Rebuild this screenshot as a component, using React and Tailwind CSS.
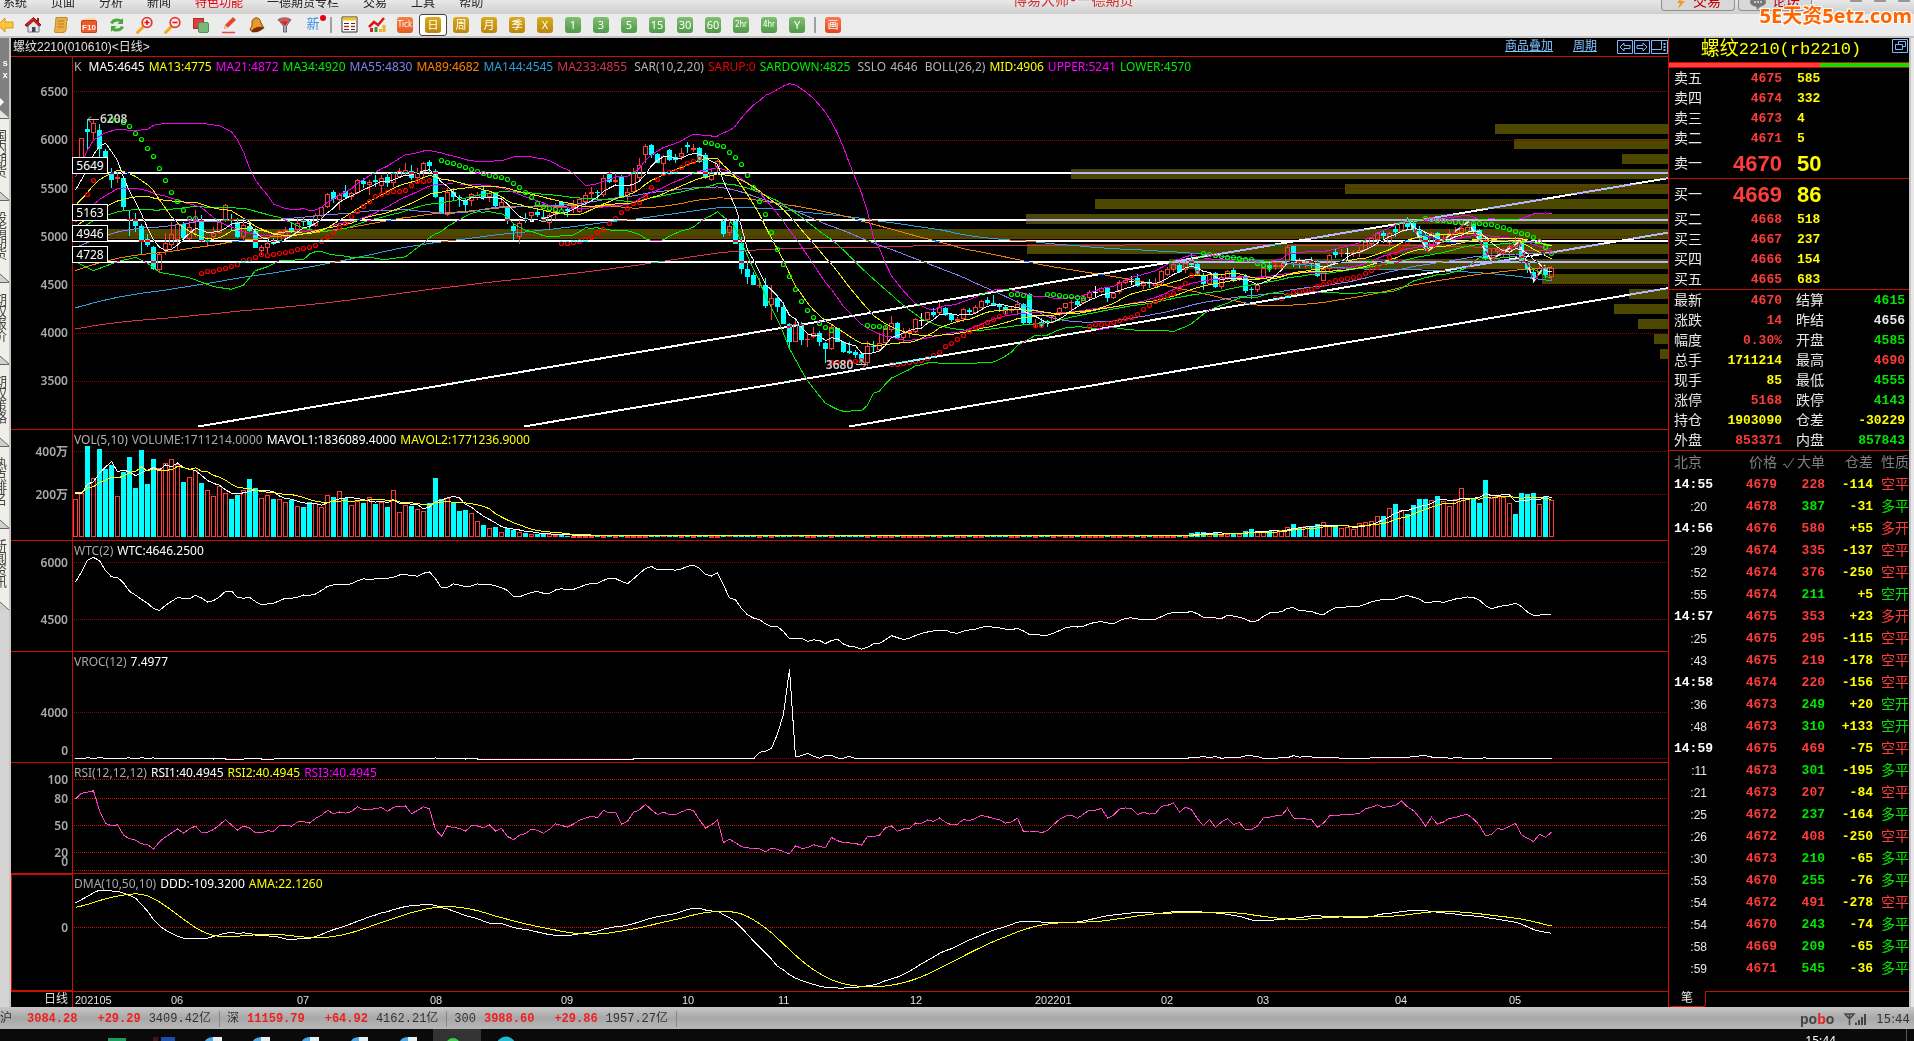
import React from "react";

const CJK = "font-['Liberation_Mono','Noto_Sans_CJK_SC',monospace]";
const TEXT = "font-['Liberation_Sans','Noto_Sans_CJK_SC',sans-serif]";
const SANS = "font-['Noto_Sans','Noto_Sans_CJK_SC',sans-serif]";
const NARROW = "font-['DejaVu_Sans_Condensed','Noto_Sans',sans-serif]";

/* ---------- market data: direction, high, top, bottom, low (chart units) ---------- */
const CANDLES_A = `r 440 450 480 490;r 295 295 400 400;c 238 267 276 330;r 240 250 278 300;c 252 270 326 350;c 327 333 400 400;c 385 398 420 443;r 395 411 416 430;c 410 415 500 510;c 510 537 540 587;c 520 537 557 575;c 553 558 605 645;c 583 598 615 620;c 618 620 687 690;r 640 643 691 697;r 580 610 630 645;r 545 583 615 625;r 550 553 600 633;c 545 553 593 597;r 540 560 598 600;r 510 538 545 590;c 525 540 603 606;r 590 600 605 622;r 562 580 592 597;r 540 545 578 582;r 492 495 540 545;c 522 538 542 570;c 533 545 590 595;r 550 556 590 600;c 540 558 573 577;c 565 573 623 625;r 615 622 632 645;r 600 609 625 640;c 595 604 612 616;r 570 572 603 605;r 560 570 590 600;c 545 563 577 580;r 535 550 570 575;c 530 540 546 557;c 540 543 555 567;r 520 525 558 562;r 500 502 527 530;r 460 463 500 505;c 450 457 478 488;r 460 465 480 510;c 435 452 470 475;r 455 458 470 480;r 418 420 458 462;c 415 423 432 445;r 420 427 434 465;c 405 420 425 440;r 405 415 438 460;c 400 412 428 440;r 395 400 430 440;r 385 393 410 415;r 370 390 400 405;c 375 393 414 420;r 385 395 415 430;r 367 370 397 410;c 360 367 377 400;c 388 392 470 473;c 470 471 520 523;r 445 457 526 528;c 445 455 471 480;c 465 470 475 500;c 475 480 495 515;r 458 462 482 497;r 455 465 473 480;c 435 452 475 480;r 455 460 472 485;c 457 460 498 505;r 470 485 500 505;c 497 500 542 552;c 550 558 572 600;r 540 550 590 612;c 520 533 540 550;r 515 517 528 545;c 505 515 525 530;c 510 530 545 547;r 520 525 550 567;r 490 495 525 540;c 483 485 505 510;c 505 508 513 530;r 480 498 503 520;r 470 478 515 520;r 455 465 485 500;r 440 455 462 475;c 450 455 460 480;r 405 415 465 470;c 395 400 425 430;r 400 420 425 430;c 405 408 470 475;r 445 455 470 490;r 385 395 455 460;r 355 375 415 420;r 313 318 345 370;c 313 315 345 355;c 340 342 368 370;r 345 348 373 395;c 328 330 360 362;c 343 350 360 368;r 325 340 352 360;c 307 315 320 340;r 313 325 331 335;c 320 324 367 370;c 340 345 413 416;r 390 395 421 423;r 360 363 380 400;c 540 542 582 590;r 545 557 580 588;c 540 543 611 613;c 590 608 688 703;c 663 688 710 733;c 695 705 734 735;r 715 735 737 745;c 715 735 798 803;r 735 775 795 840;c 770 775 800 815;c 785 802 851 852;c 848 851 905 920;r 840 853 905 907;c 845 852 900 915;r 880 898 900 920;r 860 878 892 895;c 873 880 907 917;c 905 910 926 968;r 855 860 926 930;c 863 865 905 907;c 903 905 935 938;c 905 934 940 942;c 930 937 945 955;c 938 942 970 972;r 903 917 968 977;c 903 917 920 935;r 880 910 930 935;r 855 863 910 915;r 827 850 870 875;c 845 850 893 895;r 865 878 895 907;r 865 873 880 895;r 835 838 875 880;w 820 840 843 858;r 815 817 840 848;c 805 817 825 830;r 787 802 820 823;c 800 803 825 828;c 820 822 840 845;r 830 836 842 850;r 805 808 838 845;c 803 810 815 823;r 795 800 820 823;r 780 783 803 805;c 772 780 788 795;c 765 790 795 797;c 790 795 800 815;c 795 800 813 825;r 800 808 813 820;r 780 792 810 823;c 790 793 850 853;c 760 762 848 852;r 838 848 850 860;c 833 845 857 860;c 840 843 848 860;r 825 828 845 850;r 800 805 825 828;r 788 790 803 808;r 780 785 790 810;c 780 783 795 798;r 765 775 790 793;r 750 755 775 778;w 738 755 757 770;r 742 745 755 760;c 740 744 773 785;r 755 760 773 778;r 720 727 757 763;r 718 720 728 733;w 708 722 724 735;c 703 715 738 740;r 722 728 737 747;c 718 728 733 743;r 715 730 737 740;r 690 693 730 735;r 680 688 705 708;r 668 672 690 695;c 665 675 696 698;r 663 668 690 700;c 640 660 675 677;c 668 672 705 708;c 700 706 732 750;r 700 703 732 735;c 697 700 741 743;r 705 712 742 748;r 690 693 715 720;c 685 690 722 727;r 705 712 715 722;c 703 708 752 760;c 740 747 750 778;r 730 735 750 757;r 680 685 712 715;c 670 675 683 695;r 665 675 682 690`;
const CANDLES_B = `r 605 615 620 627;r 555 562 610 615;c 555 558 605 620;c 595 603 608 625;r 600 610 613 625;c 590 603 612 625;c 600 605 648 650;r 620 628 662 663;r 583 585 628 640;c 568 575 585 595;r 568 578 583 590;w 565 578 580 605;r 570 575 583 590;r 560 570 580 590;r 540 545 570 573;r 530 535 552 560;r 515 520 540 545;c 510 520 527 550;r 517 520 548 560;c 493 508 515 530;r 480 485 515 517;c 472 485 500 510;c 480 490 510 515;c 498 513 530 540;c 520 525 563 572;r 515 520 560 567;c 515 520 550 555;r 525 540 545 548;r 508 520 540 545;r 500 517 525 535;r 495 505 520 530;r 480 500 520 525;c 490 493 515 522;c 507 510 540 545;c 530 540 597 600;r 565 590 598 605;r 560 567 577 590;r 565 570 580 590;r 545 557 575 590;r 538 545 560 570;c 540 545 605 608;c 600 605 630 640;c 625 636 655 668;r 615 625 640 645;c 620 625 645 655;r 618 623 650 662`;

const parse = (s, add) =>
  s.split(";").map((row) => {
    const [d, ...n] = row.trim().split(" ");
    const [hi, top, bot, lo] = n.map((v) => Number(v) + add);
    return { d, hi, top, bot, lo, close: d === "c" ? bot : top };
  });
const candles = [...parse(CANDLES_A, 0), ...parse(CANDLES_B, 60)];
const N = candles.length;
const X = (i) => 75.5 + 6 * i;
const Y = (v) => 40 + v / 3;

/* closes that precede the visible window, oldest first */
const block = (n, v) => Array(n).fill(v);
const history = [
  ...block(89, 968), ...block(55, 988), ...block(34, 805), ...block(21, 711),
  ...block(13, 612), ...block(8, 640), ...block(8, 535), ...block(5, 450),
];
const H = history.length;
const closes = [...history, ...candles.map((c) => c.close)];
const price = (v) => 6500 - ((v - 155) * 500) / 145;

const sma = (arr, n, i) => {
  let s = 0;
  for (let k = i - n + 1; k <= i; k++) s += arr[Math.max(0, k)];
  return s / n;
};
const series = (fn) => candles.map((_, i) => fn(i + H, i));
const ma = (n) => series((j) => sma(closes, n, j));
const toPts = (ys) => ys.map((y, i) => `${X(i)},${y.toFixed(1)}`).join(" ");

const bollMid = ma(26);
const bollDev = series((j) => {
  const m = sma(closes, 26, j);
  let s = 0;
  for (let k = j - 25; k <= j; k++) s += (closes[k] - m) ** 2;
  return 2 * Math.sqrt(s / 26);
});

/* known band values for the opening bars, linearly interpolated */
const withKnots = (ys, knots) =>
  ys.map((y, i) => {
    const n = knots.findIndex((k) => k[0] >= i);
    if (n < 0) return y;
    if (n === 0) return knots[0][1];
    const [a, va] = knots[n - 1];
    const [b, vb] = knots[n];
    return va + ((vb - va) * (i - a)) / (b - a);
  });
const UPPER = [[0, 412], [2, 330], [3, 300], [5, 278], [7, 268], [10, 272], [12, 268], [13, 256], [15, 250], [21, 250], [24, 257], [26, 275], [27, 300], [28, 335], [29, 385], [30, 420], [31, 445], [32, 465], [33, 492], [35, 506], [37, 509]];
const LOWER = [[0, 665], [3, 692], [7, 665], [10, 652], [12, 670], [14, 697], [19, 713], [23, 740], [26, 748], [28, 735], [30, 692], [32, 680], [34, 662], [38, 659]];

const MA_LINES = [
  ["#d8324f", ma(233)], ["#2f9fdc", ma(144)], ["#f08000", ma(89)], ["#8080f0", ma(55)],
  ["#00f000", ma(34)], ["#f000f0", ma(21)], ["#f0f000", ma(13)], ["#f0f000", bollMid],
  ["#f000f0", withKnots(bollMid.map((m, i) => m - bollDev[i]), UPPER)],
  ["#00f000", withKnots(bollMid.map((m, i) => m + bollDev[i]), LOWER)],
  ["#f0f0f0", ma(5)],
].map(([c, ys]) => [c, toPts(ys.map(Y))]);

/* parabolic SAR dots: colour, first bar, values */
const SAR = [
  ["g", 6, [238, 241, 247, 259, 279, 298, 325, 349, 385, 421, 455, 484, 511, 533, 534]],
  ["r", 2, [463, 419]],
  ["r", 21, [698, 694, 692, 688, 685, 677, 671, 661, 656, 650, 643, 645, 643, 640, 636, 632, 628, 625, 620, 615, 603, 592, 577, 562, 548, 527, 512, 497, 482, 468, 462, 455, 452, 452, 451, 434, 422, 422, 420]],
  ["g", 61, [361, 365, 370, 375, 381, 388, 394, 400, 404, 408, 412, 418, 428, 440, 457, 472, 490, 498, 505, 508, 512]],
  ["r", 81, [610, 608, 605, 604, 598, 590, 577, 568, 550, 534, 517, 503, 488, 487, 467, 440, 416, 398, 395, 393, 382, 370, 364, 353]],
  ["g", 105, [307, 308, 314, 317, 335, 350, 371, 404, 441, 484, 523, 575, 628, 672, 707, 748, 784, 811, 832, 850, 860, 870]],
  ["r", 126, [967, 967, 965, 963, 963, 960]],
  ["g", 132, [856, 858, 858, 862]],
  ["r", 136, [973, 971, 968, 966, 963, 960, 953, 946, 935, 919, 908, 896, 884, 873, 862, 855, 847, 838, 827, 815]],
  ["g", 156, [763, 763, 766, 770]],
  ["r", 160, [855, 856]],
  ["g", 162, [761, 763, 764, 767, 767, 770, 773]],
  ["r", 169, [857, 853, 852, 848, 845, 840, 835, 830, 821, 808, 796, 784, 773, 765, 758, 745, 730, 706, 696]],
  ["g", 188, [640, 643, 645, 648, 650, 652, 653, 657, 658, 668, 675, 680]],
  ["r", 200, [775, 775, 765, 757, 753, 750, 748, 738, 732, 725, 720, 717, 715, 712, 708, 700, 690, 680, 665, 650, 635, 620, 605]],
  ["g", 225, [535, 537, 540, 541, 543, 545, 547, 548, 549, 549, 551, 553, 557, 560, 566, 572, 578, 583, 590, 602, 622, 640]],
];

/* price distribution bars: top y, left x */
const PROFILE = [
  [124, 1495], [139, 1514], [154, 1622], [169, 1071], [184, 1345], [199, 1095], [214, 1026], [229, 108],
  [244, 1027], [259, 1169], [274, 1542], [289, 1629], [304, 1614], [319, 1638], [334, 1654], [349, 1660],
];

/* volume */
const VOL_HEAD = [238, 220, 78, 175, 87, 147, 135, 229, 155, 111, 204, 90, 192, 117, 145, 130, 118, 133, 186, 172, 150, 189, 211, 229, 199, 220, 237, 225, 211, 177, 204, 235, 226, 237, 238, 246, 240, 259, 261, 246, 249, 262, 226, 231, 214, 235, 256, 243, 249, 232, 251, 246, 261, 211, 277, 256, 258, 268, 274, 249, 174, 237, 235, 250, 274, 270, 280, 304, 315, 324, 321, 337, 325, 330, 337, 340, 343, 342, 341, 343, 345, 345];
const VOL_TAIL = [340, 336, 336, 342, 336, 345, 341, 341, 341, 333, 327, 337, 335, 333, 331, 330, 321, 312, 325, 318, 322, 312, 306, 318, 320, 324, 321, 328, 310, 306, 303, 289, 288, 265, 252, 271, 282, 255, 237, 237, 241, 228, 244, 259, 238, 204, 235, 237, 249, 180, 235, 228, 230, 250, 282, 219, 222, 219, 253, 229, 241];
const vol = [
  ...VOL_HEAD,
  ...Array.from({ length: N - VOL_HEAD.length - VOL_TAIL.length }, (_, i) => (i % 11 === 5 ? 345 : 347)),
  ...VOL_TAIL,
];
const volAll = [...block(12, 215), ...vol];
const VY = (v) => 420 + v / 3;
const volMa = (n) => toPts(vol.map((_, i) => VY(sma(volAll, n, i + 12))));

/* WTC */
const wtc = toPts(series((j) => 562.3 + ((6000 - price((closes[j] + closes[j - 1]) / 2)) * 57.4) / 1500));

/* VROC */
const SPIKE = [1017, 997, 994, 985, 942, 882, 748, 1010, 1007, 1000, 1009, 1015, 1006, 1006, 1014, 1015, 1009];
const vroc = toPts(
  vol.map((v, i) => {
    if (i >= 113 && i < 130) return VY(SPIKE[i - 113]);
    const now = 352 - v;
    const then = 352 - volAll[i];
    return VY(1016 - Math.max(-1, Math.min(9, ((now - then) / then) * 3)));
  })
);

/* RSI */
let up = 13.3;
let all = 17;
const rsi = toPts(
  series((j) => {
    const d = j === H ? 3 : closes[j - 1] - closes[j];
    const move = Math.min(d, 70);
    up = (up * 11 + Math.max(move, 0)) / 12;
    all = (all * 11 + Math.abs(move)) / 12;
    return 870.3 - (up / all) * 91;
  })
);

/* DMA */
const ddd = closes.map((_, j) => (j < 60 ? 0 : (sma(closes, 50, j) - sma(closes, 10, j)) * 3.448));
const DY = (v) => 927.3 - v / 18.2;
const dddLine = toPts(series((j) => DY(ddd[j])));
const amaLine = toPts(series((j) => DY(sma(ddd, 10, j))));

const GRID = "#900000";
const Grid = ({ ys, color = GRID }) => (
  <g stroke={color} strokeWidth="1" strokeDasharray="1 1" shapeRendering="crispEdges">
    {ys.map((y) => <line key={y} x1="74" x2="1668" y1={y + 0.5} y2={y + 0.5} />)}
  </g>
);

const Curve = ({ color, points, w = 1 }) => (
  <polyline points={points} fill="none" stroke={color} strokeWidth={w} shapeRendering="crispEdges" />
);

function Panel({ top, height, axis, labels, children, extra, selected }) {
  return (
    <section className="flex min-h-0 border-b border-[#c80f00]">
      <div className={"relative w-[62px] shrink-0 border-r border-[#c80f00] " + (selected ? "border-y border-l" : "")}>
        {axis.map(([t, y]) => (
          <span key={t} className={`absolute right-1 -translate-y-1/2 text-[12px] leading-4 font-semibold text-[#a8a8a8] ${SANS}`} style={{ top: `${((y - top) / height) * 100}%` }}>{t}</span>
        ))}
      </div>
      <div className="relative min-w-0 flex-1">
        <svg viewBox={`73 ${top} 1595 ${height}`} preserveAspectRatio="none" className="absolute inset-0 h-full w-full">{children}</svg>
        <div className={`absolute top-0.5 left-px flex gap-1 text-[12px] leading-4 whitespace-nowrap ${SANS}`}>
          {labels.map(([t, c]) => <span key={t} className="whitespace-pre" style={{ color: c }}>{t}</span>)}
        </div>
        {extra}
      </div>
    </section>
  );
}

const TAGS = [[5649, 100], [5163, 147], [4946, 168], [4728, 189]];

function PricePanel() {
  return (
    <Panel
      top={57} height={372}
      axis={[[6500, 92], [6000, 140], [5500, 189], [5000, 237], [4500, 285], [4000, 333], [3500, 381]]}
      labels={[["K ", "#b4b4b4"], ["MA5:4645", "#fff"], ["MA13:4775", "#ff0"], ["MA21:4872", "#f0f"], ["MA34:4920", "#00f000"], ["MA55:4830", "#8080f0"], ["MA89:4682", "#ff8000"], ["MA144:4545", "#2f9fdc"], ["MA233:4855", "#d8324f"], [" SAR(10,2,20)", "#b4b4b4"], ["SARUP:0", "#f00000"], ["SARDOWN:4825", "#00f000"], [" SSLO", "#b4b4b4"], ["4646 ", "#b4b4b4"], ["BOLL(26,2)", "#b4b4b4"], ["MID:4906", "#ff0"], ["UPPER:5241", "#f0f"], ["LOWER:4570", "#00f000"]]}
      extra={
        <>
          {TAGS.map(([t, y]) => (
            <span key={t} className={`absolute -left-px h-[17px] w-[36px] border border-white bg-black text-center text-[12px] leading-[15px] text-white ${SANS}`} style={{ top: `${(y / 372) * 100}%` }}>{t}</span>
          ))}
          <span className={`absolute left-[27px] text-[12px] leading-4 font-semibold text-[#d0d0d0] ${SANS}`} style={{ top: "14.5%" }}>6208</span>
          <span className={`absolute text-[12px] leading-4 font-semibold text-[#d0d0d0] ${SANS}`} style={{ top: "80.6%", left: "47.2%" }}>3680</span>
        </>
      }
    >
      <g fill="#4c4800">
        {PROFILE.map(([y, x]) => <rect key={y} x={x} y={y} width={1668 - x} height="10" />)}
      </g>
      <Grid ys={[91, 140, 188, 236, 285, 333, 381]} />
      <g shapeRendering="crispEdges">
        {candles.map((c, i) => {
          if (i === 0) return null;
          const color = c.d === "c" ? "#00ffff" : c.d === "r" ? "#ff3c3c" : "#ffffff";
          const t = Math.round(Y(c.top));
          const b = Math.max(Math.round(Y(c.bot)), t + 1);
          return (
            <g key={i} stroke={color} fill={c.d === "c" ? color : "none"}>
              <line x1={X(i)} x2={X(i)} y1={Y(c.hi)} y2={t} />
              <line x1={X(i)} x2={X(i)} y1={b} y2={Y(c.lo)} />
              <rect x={X(i) - 2} y={t + 0.5} width="4" height={Math.max(b - t - 1, 0.1)} />
            </g>
          );
        })}
      </g>
      {MA_LINES.map(([c, p], i) => <Curve key={i} color={c} points={p} />)}
      {SAR.map(([c, start, vs]) =>
        vs.map((v, k) => <ellipse key={`${start}-${k}`} cx={X(start + k)} cy={Math.round(Y(v)) + 0.5} rx="2" ry="2" fill="none" stroke={c === "g" ? "#00ff00" : "#ff0000"} strokeWidth="1.200" />)
      )}
      <polyline points="1408,219 1428,251 1468,222 1491,260 1519,242 1534,281 1545,265" fill="none" stroke="#fff" strokeWidth="1.500" />
      <polyline points="1408,219 1428,251 1468,222 1491,260 1519,242 1534,281 1545,265" fill="none" stroke="#c00040" strokeWidth="1.500" strokeDasharray="5 6" />
      <polyline points="1419,234 1450,243 1481,240 1506,241 1534,242" fill="none" stroke="#2020ff" strokeWidth="1" />
      <g className="mix-blend-difference" stroke="#fff" strokeWidth="2" shapeRendering="crispEdges">
        {[173, 220, 241, 262].map((y) => <line key={y} x1="73" x2="1668" y1={y} y2={y} />)}
        <path d="M198 426.500L1669 178M524 426.500L1669 232.500M849 426.500L1669 288" />
      </g>
      <path d="M88 119.500h11M88 119.500l3-3M88 119.500l3 3M856 364.500h10M866 364.500l-3-3M866 364.500l-3 3" stroke="#d0d0d0" fill="none" />
    </Panel>
  );
}

function VolumePanel() {
  return (
    <Panel
      top={430} height={110} axis={[["400万", 452], ["200万", 495]]}
      labels={[["VOL(5,10)", "#b4b4b4"], ["VOLUME:1711214.0000", "#a8a8a8"], ["MAVOL1:1836089.4000", "#fff"], ["MAVOL2:1771236.9000", "#ff0"]]}
    >
      <Grid ys={[451, 494]} />
      <g shapeRendering="crispEdges">
        {vol.map((v, i) => {
          const y = Math.round(VY(v));
          const cyan = candles[i].d === "c" || i === 240;
          return cyan
            ? <rect key={i} x={X(i) - 2.5} y={y} width="5" height={537 - y} fill="#00ffff" />
            : <rect key={i} x={X(i) - 2} y={y + 0.5} width="4" height={Math.max(536 - y, 0.5)} fill="none" stroke="#ff3c3c" />;
        })}
      </g>
      <Curve color="#fff" points={volMa(5)} />
      <Curve color="#ff0" points={volMa(10)} />
    </Panel>
  );
}

const DATES = [["202105", 74], ["06", 170], ["07", 296], ["08", 429], ["09", 560], ["10", 681], ["11", 777], ["12", 909], ["202201", 1034], ["02", 1160], ["03", 1256], ["04", 1394], ["05", 1508]];

function ChartArea() {
  return (
    <main className="flex min-w-0 flex-1 flex-col">
      <header className="flex h-[19px] shrink-0 items-center border-b border-[#c80f00]">
        <h1 className={`pl-0.5 text-[12px] text-[#e0e0e0] ${TEXT}`}>螺纹2210(010610)&lt;日线&gt;</h1>
        <div className={`ml-auto flex items-center gap-5 text-[12px] leading-4 text-[#7fc4ff] ${CJK}`}>
          <a href="#overlay" className="underline">商品叠加</a>
          <a href="#period" className="underline">周期</a>
          <div className="flex gap-px">
            <button aria-label="左移"><svg width="16" height="14" fill="none" stroke="#7fb8ff"><path d="M.5.500h15v13H.5zM3 7l4-4v2.500h6v3H7V11z" /></svg></button>
            <button aria-label="右移"><svg width="16" height="14" fill="none" stroke="#7fb8ff"><path d="M.5.500h15v13H.5zM13 7L9 3v2.500H3v3h6V11z" /></svg></button>
            <button aria-label="布局"><svg width="17" height="14" fill="none" stroke="#7fb8ff"><path d="M.5.500h16v13H.5zM1 9.500h9.500V1" /><path d="M13.500 3v9" strokeDasharray="2 1" strokeWidth="2" /></svg></button>
          </div>
        </div>
      </header>
      <div className="grid min-h-0 flex-1 grid-rows-[373fr_111fr_111fr_111fr_111fr_118fr]">
        <PricePanel />
        <VolumePanel />
        <Panel top={541} height={110} axis={[["6000", 563], ["4500", 620]]} labels={[["WTC(2)", "#a8a8a8"], ["WTC:4646.2500", "#fff"]]}>
          <Grid ys={[562, 619]} />
          <Curve color="#fff" points={wtc} />
        </Panel>
        <Panel top={652} height={110} axis={[["4000", 713], ["0", 751]]} labels={[["VROC(12)", "#a8a8a8"], ["7.4977", "#fff"]]}>
          <Grid ys={[712, 758]} />
          <Curve color="#fff" points={vroc} />
        </Panel>
        <Panel top={763} height={110} axis={[["100", 780], ["80", 799], ["50", 826], ["20", 853], ["0", 862]]} labels={[["RSI(12,12,12)", "#a8a8a8"], ["RSI1:40.4945", "#fff"], ["RSI2:40.4945", "#ff0"], ["RSI3:40.4945", "#f0f"]]}>
          <Grid ys={[779, 798, 825, 852, 870]} color="#c80f00" />
          <Curve color="#ff20e0" points={rsi} />
          <polyline points={rsi} fill="none" stroke="#ff6a90" strokeDasharray="4 5" shapeRendering="crispEdges" />
        </Panel>
        <Panel selected top={874} height={117} axis={[["0", 928]]} labels={[["DMA(10,50,10)", "#a8a8a8"], ["DDD:-109.3200", "#fff"], ["AMA:22.1260", "#ff0"]]}>
          <Grid ys={[927]} color="#c80f00" />
          <Curve color="#fff" points={dddLine} />
          <Curve color="#ff0" points={amaLine} />
        </Panel>
      </div>
      <footer className={`flex h-[15px] shrink-0 text-[12px] leading-4 text-[#e0e0e0] ${CJK}`}>
        <span className="w-[62px] border-r border-[#c80f00] pr-1 text-right">日线</span>
        <div className={`relative flex-1 text-[11px] ${TEXT}`}>
          {DATES.map(([t, x]) => <span key={t} className="absolute top-0" style={{ left: `${((x - 72) / 1595) * 100}%` }}>{t}</span>)}
        </div>
      </footer>
    </main>
  );
}

/* ---------- quote panel ---------- */
const R = "text-[#ff3c3c]", G = "text-[#00e600]", Yl = "text-[#ffff00]", W = "text-[#e8e8e8]";
const ASKS = [["卖五", 4675, 585], ["卖四", 4674, 332], ["卖三", 4673, 4], ["卖二", 4671, 5], ["卖一", 4670, 50]];
const BIDS = [["买一", 4669, 86], ["买二", 4668, 518], ["买三", 4667, 237], ["买四", 4666, 154], ["买五", 4665, 683]];
const STATS = [
  ["最新", "4670", R, "结算", "4615", G], ["涨跌", "14", R, "昨结", "4656", W], ["幅度", "0.30%", R, "开盘", "4585", G],
  ["总手", "1711214", Yl, "最高", "4690", R], ["现手", "85", Yl, "最低", "4555", G], ["涨停", "5168", R, "跌停", "4143", G],
  ["持仓", "1903090", Yl, "仓差", "-30229", Yl], ["外盘", "853371", R, "内盘", "857843", G],
];
const TICKS = `14:55 4679 228 -114 空平 r;:20 4678 387 -31 多平 g;14:56 4676 580 +55 多开 r;:29 4674 335 -137 空平 r;:52 4674 376 -250 空平 r;:55 4674 211 +5 空开 g;14:57 4675 353 +23 多开 r;:25 4675 295 -115 空平 r;:43 4675 219 -178 空平 r;14:58 4674 220 -156 空平 r;:36 4673 249 +20 空开 g;:48 4673 310 +133 空开 g;14:59 4675 469 -75 空平 r;:11 4673 301 -195 多平 g;:21 4673 207 -84 空平 r;:25 4672 237 -164 多平 g;:26 4672 408 -250 空平 r;:30 4673 210 -65 多平 g;:53 4670 255 -76 多平 g;:54 4672 491 -278 空平 r;:54 4670 243 -74 多平 g;:58 4669 209 -65 多平 g;:59 4671 545 -36 多平 g`
  .split(";").map((r) => r.split(" "));

function Book({ rows, big }) {
  return (
    <table className="w-full table-fixed border-b border-[#c80f00]">
      <tbody>
        {rows.map(([n, p, v]) => {
          const l = n === big;
          const size = l ? "h-[30px] font-['Liberation_Sans',sans-serif] text-[22px] leading-[28px]" : "h-5 text-[13px] leading-[18px]";
          return (
            <tr key={n}>
              <th className={`w-[44px] p-0 pt-0.5 pl-[5px] text-left text-[14px] font-normal ${W} ${l ? "leading-[28px]" : "leading-[18px]"}`}>{n}</th>
              <td className={`w-[69px] p-0 pt-0.5 text-right font-bold ${R} ${size}`}>{p}</td>
              <td className={`p-0 pt-0.5 pl-[15px] font-bold ${Yl} ${size}`}>{v}</td>
            </tr>
          );
        })}
      </tbody>
    </table>
  );
}

function QuotePanel() {
  return (
    <aside className={`flex w-[241px] shrink-0 flex-col border-l border-[#c80f00] text-[13px] ${CJK}`}>
      <div className="relative flex h-6 shrink-0 items-center justify-center text-[#ffff00]">
        <h2 className="flex items-center pr-4 leading-6"><span className="text-[19px]">螺纹</span><span className="text-[17px]">2210(rb2210)</span></h2>
        <button aria-label="还原" className="absolute top-px right-px"><svg width="16" height="14" fill="none" stroke="#7fb8ff"><path d="M.5.500h15v13H.5zM6.500 5.500v-3h7v5h-3M3.500 5.500h7v5h-7z" /></svg></button>
      </div>
      <div className="flex h-[6px] shrink-0 border-y border-[#c80f00]"><div className="w-[63%] bg-[#ff3c3c]" /><div className="flex-1 bg-[#00e600]" /></div>
      <Book rows={ASKS} big="卖一" />
      <Book rows={BIDS} big="买一" />
      <table className="w-full table-fixed border-b border-[#c80f00]">
        <tbody>
          {STATS.map(([a, b, c, d, e, f]) => (
            <tr key={a} className="h-5 leading-[18px]">
              <th className={`w-[36px] p-0 pt-0.5 pl-[5px] text-left text-[14px] font-normal ${W}`}>{a}</th>
              <td className={`w-[77px] p-0 pt-0.5 text-right font-bold ${c}`}>{b}</td>
              <th className={`w-[46px] p-0 pt-0.5 pl-[14px] text-left text-[14px] font-normal ${W}`}>{d}</th>
              <td className={`p-0 pt-0.5 pr-1 text-right font-bold ${f}`}>{e}</td>
            </tr>
          ))}
        </tbody>
      </table>
      <table className="w-full table-fixed">
        <thead>
          <tr className="h-[22px] text-right text-[14px] leading-5 text-[#808080]">
            <th className="w-[38px] p-0 pt-0.5 pl-[5px] text-left font-normal">北京</th>
            <th className="w-[70px] p-0 pt-0.5 font-normal">价格</th>
            <th className="w-[48px] p-0 pt-0.5 font-normal whitespace-nowrap"><svg width="13" height="12" className="mr-0.5 inline-block" fill="none" stroke="#808080"><path d="M1 8l2-1 2 4 7-10" /></svg>大单</th>
            <th className="w-[48px] p-0 pt-0.5 font-normal">仓差</th>
            <th className="p-0 pt-0.5 font-normal">性质</th>
          </tr>
        </thead>
        <tbody>
          {TICKS.map(([t, p, v, d, k, c], i) => {
            const col = c === "r" ? R : G;
            return (
              <tr key={i} className="h-[22px] text-right leading-5 font-bold">
                <td className={t.length > 3 ? "w-[38px] p-0 pt-0.5 pl-[5px] text-left text-[13px] text-white" : "w-[38px] p-0 pt-0.5 font-['Liberation_Sans',sans-serif] text-[12px] font-normal text-[#e8e8e8]"}>{t}</td>
                <td className={`p-0 pt-0.5 ${R}`}>{p}</td>
                <td className={`p-0 pt-0.5 ${col}`}>{v}</td>
                <td className={`p-0 pt-0.5 ${Yl}`}>{d}</td>
                <td className={`p-0 pt-0.5 text-[14px] font-normal ${col}`}>{k}</td>
              </tr>
            );
          })}
        </tbody>
      </table>
      <div className="mt-auto flex h-4 shrink-0">
        <button className="w-[37px] rounded-b-[3px] border-r border-b border-[#c80f00] text-center text-[12px] leading-[14px] text-[#e8e8e8]">笔</button>
        <div className="flex-1 border-t border-[#c80f00]" />
      </div>
    </aside>
  );
}

/* ---------- toolbar ---------- */
const Tile = ({ t, a, b, c = "text-white" }) => (
  <span className={`flex h-4 w-4 items-center justify-center rounded-[3px] bg-linear-to-b text-[11px] leading-4 ${a} ${b} ${c} ${SANS}`}>{t}</span>
);
const Lens = ({ plus }) => (
  <svg width="18" height="18" viewBox="0 0 18 18"><path d="M1.500 16.500l6-6" stroke="#f5a81c" strokeWidth="3" strokeLinecap="round" /><circle cx="11" cy="6.500" r="4.800" fill="#ffecec" stroke="#e23b30" strokeWidth="1.800" /><path d={plus ? "M8.500 6.500h5M11 4v5" : "M8.500 6.500h5"} stroke="#e01010" strokeWidth="1.600" /></svg>
);
const ICONS = [
  ["后退", <svg width="18" height="18" viewBox="0 0 18 18"><path d="M2 9l7-7v4h8v6H9v4z" fill="#fcc63a" stroke="#d99a17" /></svg>],
  ["首页", <svg width="18" height="18" viewBox="0 0 18 18"><path d="M4 8v8h11V8" fill="#e4e6ea" stroke="#70757c" /><path d="M1 9l8.500-7.500L17 9l-2 1-5.500-5L3 10.500z" fill="#d81e1e" stroke="#8c1010" /><path d="M8 11h3.500v5H8z" fill="#404850" /><path d="M13 2h2v4h-2z" fill="#a01414" /></svg>],
  ["资讯", <svg width="18" height="18" viewBox="0 0 18 18"><path d="M4 1.500h11q1.500 2-.5 4l-.5 9q-1 2-3 2H3q-1.500-1.500 0-4z" fill="#e9b04a" stroke="#c58a22" /><path d="M6 5h6M6 8h6M5.500 11h6" stroke="#b57a18" /></svg>],
  ["F10", <svg width="18" height="18" viewBox="0 0 18 18"><path d="M3 3l12-2v5H3z" fill="#fbd9a0" /><rect x="1.500" y="4.500" width="15" height="12" rx="1" fill="#ef5a28" stroke="#c8401a" /><text x="9" y="14" textAnchor="middle" fontSize="8" fontWeight="700" fill="#fff" fontFamily="Liberation Sans">F10</text></svg>],
  ["刷新", <svg width="18" height="18" viewBox="0 0 18 18" fill="none" stroke="#4aa83e" strokeWidth="3"><path d="M3.500 7.500Q5 4 9 4t5 2M14.500 10.500Q13 14 9 14t-5-2" /><path d="M15 2v6H9.500zM3 16v-6h5.500z" fill="#4aa83e" stroke="none" /></svg>],
  ["放大", <Lens plus />],
  ["缩小", <Lens />],
  ["叠加", <svg width="18" height="18" viewBox="0 0 18 18"><rect x="1.500" y="2.500" width="10" height="10" fill="#d8423a" stroke="#b02a24" /><rect x="6.500" y="6.500" width="10" height="10" rx="1.500" fill="#78b878" stroke="#4f9450" /></svg>],
  ["画线", <svg width="18" height="18" viewBox="0 0 18 18"><path d="M4 13l1-4L13 1l3 3-8 7.500z" fill="#e8452c" /><path d="M4 13l1-4 3 2.500z" fill="#f6c890" /><path d="M2 16.500h13" stroke="#f0443c" strokeWidth="1.500" /></svg>],
  ["预警", <svg width="18" height="18" viewBox="0 0 18 18"><path d="M7 2q5-1 6 5l3 5-11 4q-3-1-3-3 3-3 2-6t3-5z" fill="#e79a2c" stroke="#8c4a0c" /><ellipse cx="9.500" cy="13.500" rx="6" ry="2.300" transform="rotate(-18 9.500 13.500)" fill="#7a2c08" /></svg>],
  ["选股", <svg width="18" height="18" viewBox="0 0 18 18"><path d="M2 3.500h13L10.500 10v6h-3v-6z" fill="#a9adb3" stroke="#666b72" /><ellipse cx="8.500" cy="3.800" rx="6" ry="2" fill="#e85050" stroke="#777" /><path d="M4.500 5.500h8L9 10z" fill="#e02020" /></svg>],
  ["新", <span className="relative text-[13px] leading-4 text-[#3b8eea]">新<i className="absolute -top-0.5 -right-1.5 h-1.5 w-1.5 rounded-full bg-red-600" /></span>],
];
const PERIODS = [
  ["Tick", "from-[#f58048]", "to-[#e45c24]"], ["日", "from-[#d9ab1c]", "to-[#b98708]"], ["周", "from-[#d9ab1c]", "to-[#b98708]"],
  ["月", "from-[#d9ab1c]", "to-[#b98708]"], ["季", "from-[#d9ab1c]", "to-[#b98708]"], ["X", "from-[#d9ab1c]", "to-[#b98708]"],
  ...["1", "3", "5", "15", "30", "60", "2hr", "4hr", "Y"].map((t) => [t, "from-[#7fbf70]", "to-[#4f9a48]"]),
];
const Btn = ({ label, on, children }) => (
  <button aria-label={label} className={`flex h-[22px] w-7 shrink-0 items-center justify-center ${on ? "rounded-[3px] border border-[#444] bg-white" : ""}`}>{children}</button>
);

function Toolbar() {
  return (
    <div className={`flex h-6 shrink-0 items-center overflow-hidden border-b-2 border-[#c8c4c4] bg-[#ececec] pb-px ${CJK}`}>
      <div className="-ml-[9px] flex items-center">
        {ICONS.map(([n, icon]) => <Btn key={n} label={n}>{icon}</Btn>)}
        <i className="mx-[3px] h-4 w-0.5 bg-[#a0a0a0]" />
        <Btn label="报价"><svg width="17" height="17" viewBox="0 0 17 17"><path d="M1 1h15v15H1z" fill="#fff" stroke="#333" /><path d="M1.500 1.500h14v3h-14z" fill="#f2c31c" /><path d="M3 7.500h5M3 13.500h5M10 7.500h4M10 13.500h4" stroke="#333" strokeWidth="1.200" /><path d="M3 10.500h5M10 10.500h4" stroke="#e02020" strokeWidth="1.500" /></svg></Btn>
        <Btn label="分时"><svg width="18" height="17" viewBox="0 0 18 17"><path d="M2 12h3v4H2z" fill="#d02020" /><path d="M6.500 11h3v5h-3z" fill="#38963c" /><path d="M11 13h3v3h-3zM14.500 9h3v7h-3z" fill="#f0b020" /><path d="M1 11l5-5 4 3 6-7" fill="none" stroke="#d81818" strokeWidth="2.500" /></svg></Btn>
        {PERIODS.map(([t, a, b]) => (
          <Btn key={t} label={t} on={t === "日"}>
            {t.length > 2 ? <span className={`flex h-4 w-4 items-center justify-center rounded-[3px] bg-linear-to-b text-[8px] leading-4 text-white ${a} ${b} ${NARROW}`}>{t}</span> : <Tile t={t} a={a} b={b} />}
          </Btn>
        ))}
        <i className="mx-[3px] h-4 w-0.5 bg-[#a0a0a0]" />
        <Btn label="画"><Tile t="画" a="from-[#fa7850]" b="to-[#e0441c]" /></Btn>
      </div>
    </div>
  );
}

const MENU = ["系统", "页面", "分析", "新闻", "特色功能", "一德期货专栏", "交易", "工具", "帮助"];

function MenuBar() {
  return (
    <div className={`relative flex h-[14px] shrink-0 items-start justify-between bg-linear-to-b from-[#e8e8e8] to-[#cfcfcf] text-[12px] leading-4 text-[#222] ${CJK}`}>
      <nav className="-mt-[5px] flex h-[18px] gap-6 pl-[3px]">
        {MENU.map((m) => <button key={m} className={m === "特色功能" ? "text-red-600" : ""}>{m}</button>)}
      </nav>
      <span className="absolute -top-[7px] left-[1013px] text-[14px] text-[#d03030]">博易大师-一德期货</span>
      <div className="flex gap-[3px] pr-[102px] text-[14px] text-red-700">
        <button className="flex h-[11px] w-[74px] items-end justify-center gap-1.5 overflow-hidden rounded-b-[4px] border border-t-0 border-[#909090] bg-[#d8d8d8] leading-4">
          <svg width="12" height="14" viewBox="0 0 12 14"><path d="M8 0L2 7h3l-2 6 7-8H6z" fill="#f39a1c" /></svg>交易
        </button>
        <button className="flex h-[11px] w-[74px] items-end justify-center gap-1.5 overflow-hidden rounded-b-[4px] border border-t-0 border-[#909090] bg-[#d8d8d8] leading-4">
          <svg width="16" height="14" viewBox="0 0 16 14"><ellipse cx="8" cy="6" rx="8" ry="5" fill="#777" /><path d="M6 9l1 5 4-4z" fill="#777" /><path d="M4 6h2M7 6h2M10 6h2" stroke="#ddd" strokeWidth="1.500" /></svg>论坛
        </button>
      </div>
      <div className="absolute top-0 right-1 flex gap-3 text-[#888]">
        <i className="h-0.5 w-3 bg-[#999]" /><i className="h-0.5 w-3 bg-[#999]" /><i className="h-0.5 w-3 bg-[#999]" />
      </div>
      <div className="absolute top-1 right-0.5 z-10 font-['Noto_Sans','Noto_Sans_CJK_SC',sans-serif] text-[20px] leading-6 font-bold text-[#ff6600] [text-shadow:1px_1px_0_#fff,-1px_-1px_0_#fff,1px_-1px_0_#fff,-1px_1px_0_#fff]">5E天资5etz.com</div>
    </div>
  );
}

const SIDE = ["国内期货", "股指期货", "期权报价", "期权策略", "热点排名", "新闻资讯"];

function SideTabs() {
  return (
    <nav className={`flex w-[11px] shrink-0 flex-col overflow-hidden border-r-2 border-[#c8c4c4] bg-[#d4d4d4] ${CJK}`}>
      <button className="relative h-20 shrink-0 overflow-hidden bg-[#808080] pb-4 text-right text-[9px] leading-3 font-bold text-white">
        <span className="block pr-px">s</span><span className="block pr-px">x</span>
        <svg width="9" height="80" className="absolute inset-0"><path d="M0 60l4 4-4 4z" fill="#fff" /><path d="M0 72l9 8H0z" fill="#e4e4e4" /></svg>
      </button>
      {SIDE.map((s) => (
        <button key={s} className="relative flex h-[82px] shrink-0 justify-end overflow-hidden border-t border-[#666] bg-[#f0eee8]">
          <span className="mt-3 mr-0.5 w-[13px] text-[13px] leading-[12px] break-all text-[#444]">{s}</span>
          <svg width="9" height="8" className="absolute bottom-0 left-0"><path d="M0 0l9 8H0z" fill="#d0d0d0" /><path d="M0 0l9 8" stroke="#666" /></svg>
        </button>
      ))}
    </nav>
  );
}

const INDICES = [["沪", "3084.28", "+29.29", "3409.42亿"], ["深", "11159.79", "+64.92", "4162.21亿"], ["300", "3988.60", "+29.86", "1957.27亿"]];

function StatusBar() {
  return (
    <footer className={`flex h-[22px] shrink-0 items-center bg-linear-to-b from-[#c8c6c6] via-[#a8a8a8] to-[#b8b8b8] pt-0.5 text-[12px] leading-4 text-[#333] ${CJK}`}>
      {INDICES.map(([n, v, d, t], i) => (
        <div key={n} className="flex items-center whitespace-nowrap">
          <span className={i === 0 ? "mr-[15px]" : "mr-2 ml-[7px]"}>{n}</span>
          <b className="mr-5 text-[#f02020]">{v}</b>
          <b className="mr-2 text-[#f02020]">{d}</b>
          <span>{t}</span>
          <i className="ml-2 h-4 w-px bg-[#888]" />
        </div>
      ))}
      <div className="ml-auto flex items-center gap-2.5 pr-1">
        <b className="font-['Liberation_Sans',sans-serif] text-[14px] text-[#444]">po<span className="text-[#f02020]">b</span>o</b>
        <svg width="22" height="12" fill="none" stroke="#444" strokeWidth="1.500"><path d="M1 1h9L5.500 6zM5.500 1v11" /><path d="M12 12V9.500M15 12V7M18 12V4M21 12V1" strokeWidth="2" /></svg>
        <span className={`text-[13px] ${NARROW}`}>15:44</span>
      </div>
    </footer>
  );
}

function TaskBar() {
  return (
    <div className="flex h-3 shrink-0 overflow-hidden bg-[#0a0a0a]">
      <svg width="530" height="12" viewBox="0 0 530 12">
        <path d="M433 0h48v12h-48z" fill="#333" />
        <path d="M108 9h18v3h-18z" fill="#1d9a5c" />
        <path d="M153 8h5v4h-5z" fill="#401818" /><path d="M161 8h14v4h-14z" fill="#1c4fa8" />
        {[205, 253, 302, 351, 400].map((x) => <g key={x}><path d={`M${x} 12q2-4 9-4v4z`} fill="#4aa8e8" /><path d={`M${x + 8} 8h9v4h-9z`} fill="#e8f0f4" /></g>)}
        <circle cx="453" cy="16" r="7" fill="#3ccf4e" /><circle cx="506" cy="17" r="9.500" fill="#22b8d0" />
      </svg>
      <div className="ml-auto flex gap-[70px] pr-[7px]">
        <span className={`mt-1 text-[12px] leading-4 text-white ${SANS}`}>15:44</span>
        <i className="w-px bg-[#555]" />
      </div>
    </div>
  );
}

export default function App() {
  return (
    <div className="flex h-screen flex-col overflow-hidden bg-black">
      <MenuBar />
      <Toolbar />
      <div className="flex min-h-0 flex-1">
        <SideTabs />
        <ChartArea />
        <QuotePanel />
        <div className="w-[5px] shrink-0 border-l-2 border-[#c8c4c8] bg-[#e8e8e8]" />
      </div>
      <StatusBar />
      <TaskBar />
    </div>
  );
}
